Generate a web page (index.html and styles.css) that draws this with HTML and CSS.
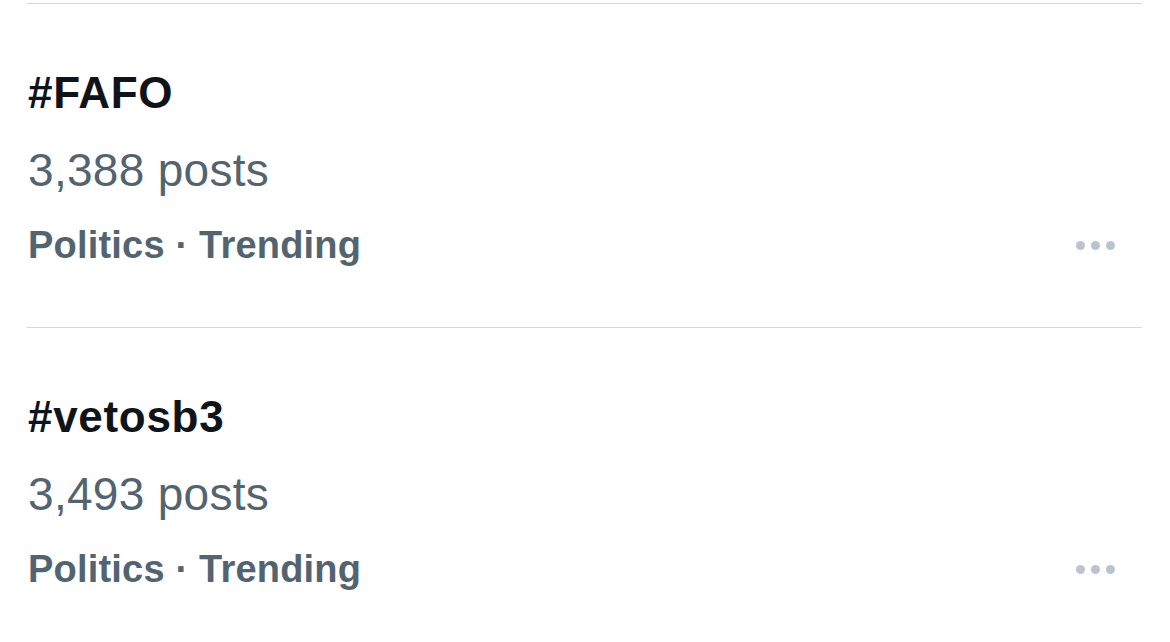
FILE: index.html
```html
<!DOCTYPE html>
<html>
<head>
<meta charset="utf-8">
<link rel="stylesheet" href="styles.css">
</head>
<body>
<div class="list">
  <div class="trend">
    <div class="title">#FAFO</div>
    <div class="count">3,388 posts</div>
    <div class="meta">
      <span class="cat">Politics · Trending</span>
      <span class="more"><i></i><i></i><i></i></span>
    </div>
  </div>
  <div class="trend">
    <div class="title">#vetosb3</div>
    <div class="count">3,493 posts</div>
    <div class="meta">
      <span class="cat">Politics · Trending</span>
      <span class="more"><i></i><i></i><i></i></span>
    </div>
  </div>
</div>
</body>
</html>
```
FILE: styles.css
```css
html, body {
  margin: 0;
  padding: 0;
  background: #ffffff;
}
body {
  font-family: "Liberation Sans", Arial, sans-serif;
  padding-top: 3px;
}
.list {
  margin-left: 27px;
  width: 1115px;
}
.trend {
  border-top: 1px solid #d6d6d6;
  padding: 50px 0 46px 1px;
}
.title {
  font-size: 44px;
  font-weight: 700;
  line-height: 78px;
  letter-spacing: 0.7px;
  color: #0f1419;
}
.count {
  font-size: 46px;
  line-height: 77px;
  letter-spacing: 0.3px;
  color: #536471;
}
.meta {
  display: flex;
  justify-content: space-between;
  align-items: center;
  height: 72px;
  padding-right: 27px;
}
.cat {
  font-size: 38px;
  font-weight: 700;
  line-height: 72px;
  letter-spacing: 0.2px;
  color: #536471;
}
.more {
  display: flex;
  gap: 6px;
}
.more i {
  display: block;
  width: 9px;
  height: 9px;
  border-radius: 50%;
  background: #b9c5cc;
}
```
